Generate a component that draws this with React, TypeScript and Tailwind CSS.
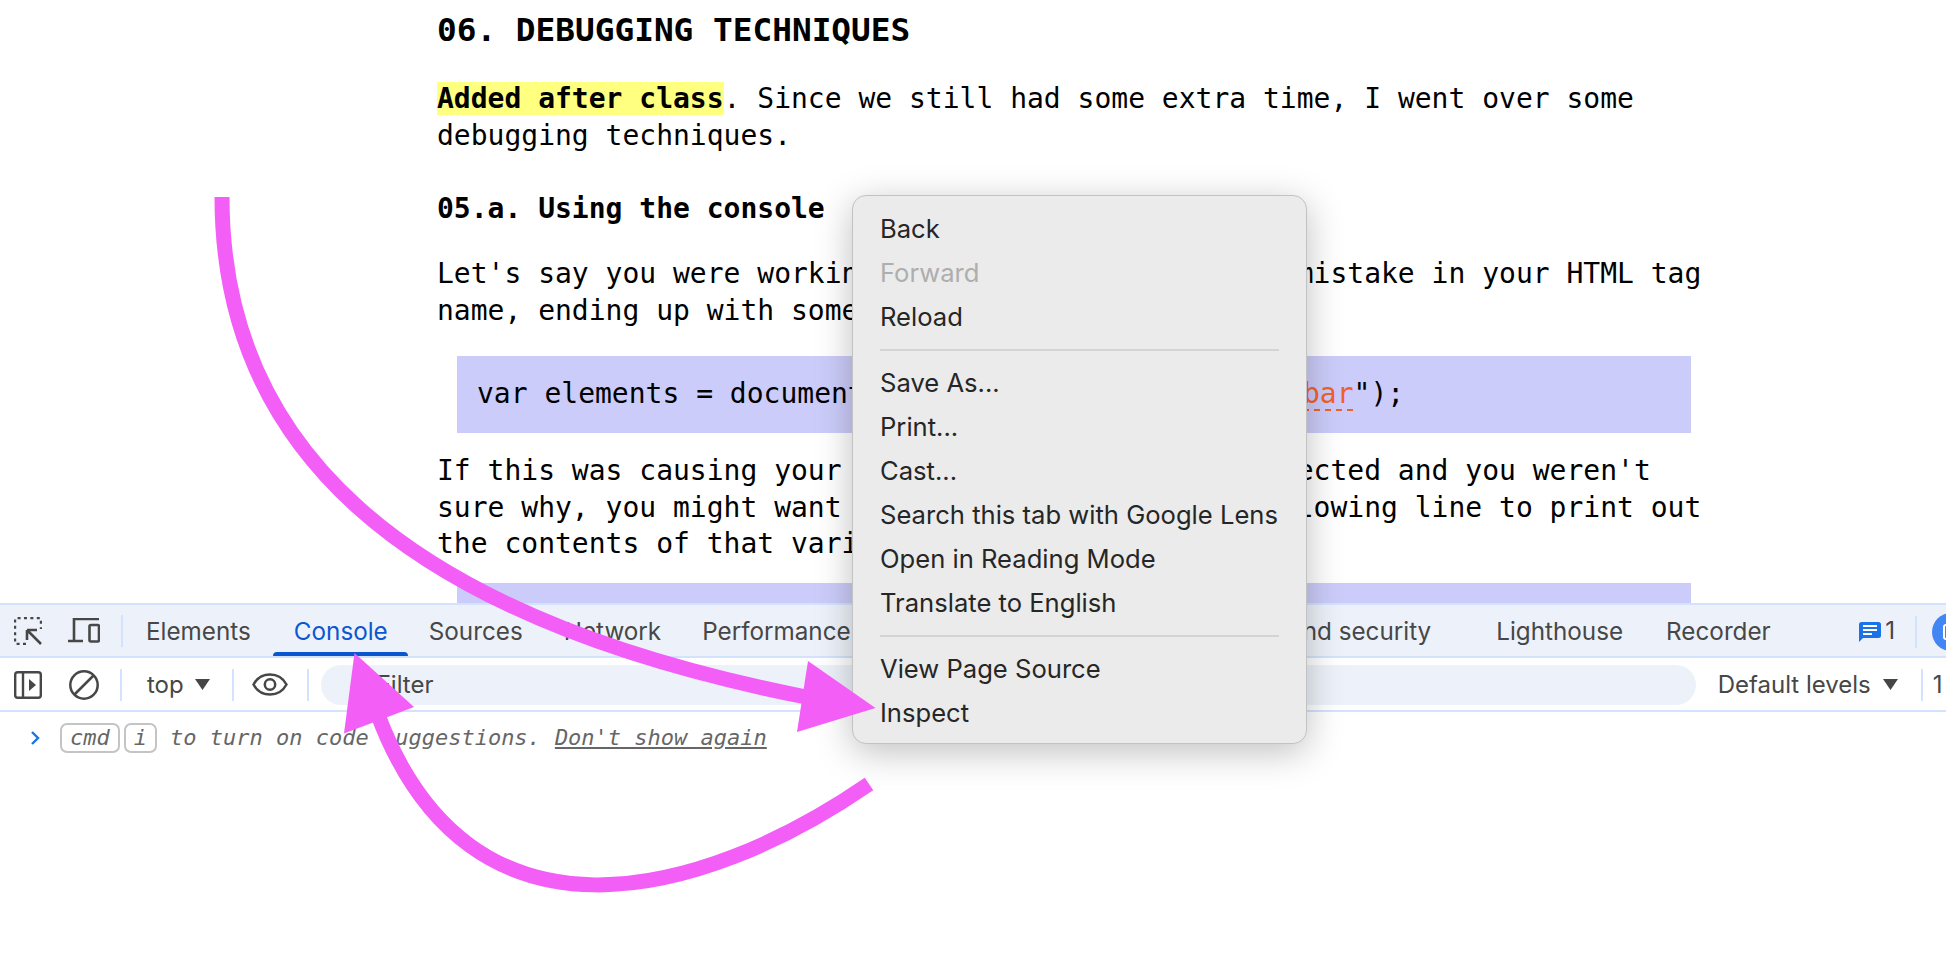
const mono = { fontFamily: '"DejaVu Sans Mono", monospace' };

const tabs = ['Elements', 'Console', 'Sources', 'Network', 'Performance', 'Memory', 'Application', 'Privacy and security', 'Lighthouse', 'Recorder'];

const menuGroups = [
  ['Back', 'Forward', 'Reload'],
  ['Save As...', 'Print...', 'Cast...', 'Search this tab with Google Lens', 'Open in Reading Mode', 'Translate to English'],
  ['View Page Source', 'Inspect'],
];

const Divider = () => <div className="w-[2px] h-[32px] bg-[#d3e3fd] shrink-0" />;

const Caret = () => (
  <svg width="15" height="11" viewBox="0 0 15 11" className="shrink-0">
    <path d="M0 0H15L7.5 11Z" fill="#444746" />
  </svg>
);

const InspectIcon = () => (
  <svg width="28" height="28" viewBox="0 0 28 28" fill="none" className="shrink-0">
    <path d="M12 27H2a1 1 0 0 1-1-1V2a1 1 0 0 1 1-1h24a1 1 0 0 1 1 1v10" stroke="#474747" strokeWidth="2.4" strokeDasharray="3 3.4" />
    <path d="M27 27 13 13M13 13v10M13 13h10" stroke="#474747" strokeWidth="2.6" />
  </svg>
);

const DeviceIcon = () => (
  <svg width="32" height="25" viewBox="0 0 32 25" fill="none" className="shrink-0">
    <path d="M31 1H6v21M0 23h15" stroke="#474747" strokeWidth="2.6" />
    <rect x="21.5" y="7" width="9.5" height="16.5" rx="1.5" stroke="#474747" strokeWidth="2.6" />
  </svg>
);

const SidebarIcon = () => (
  <svg width="28" height="28" viewBox="0 0 28 28" fill="none" className="shrink-0">
    <rect x="1.2" y="1.2" width="25.6" height="25.6" rx="2.5" stroke="#474747" strokeWidth="2.4" />
    <path d="M9 1v26" stroke="#474747" strokeWidth="2.4" />
    <path d="M15 8v12l7-6Z" fill="#474747" />
  </svg>
);

const BlockIcon = () => (
  <svg width="30" height="30" viewBox="0 0 30 30" fill="none" className="shrink-0">
    <circle cx="15" cy="15" r="13.7" stroke="#474747" strokeWidth="2.5" />
    <path d="M5.5 24.5 24.5 5.5" stroke="#474747" strokeWidth="2.5" />
  </svg>
);

const EyeIcon = () => (
  <svg width="36" height="23" viewBox="0 0 36 23" fill="none" className="shrink-0">
    <path d="M1.5 11.5C5 5 11 1.5 18 1.5S31 5 34.5 11.5C31 18 25 21.5 18 21.5S5 18 1.5 11.5Z" stroke="#474747" strokeWidth="2.5" />
    <circle cx="18" cy="11.5" r="5.2" stroke="#474747" strokeWidth="2.5" />
  </svg>
);

const MessageIcon = () => (
  <svg width="22" height="20" viewBox="0 0 22 20" className="shrink-0">
    <path d="M2.5 0h17A2.5 2.5 0 0 1 22 2.5v11a2.5 2.5 0 0 1-2.5 2.5H4L0 20V2.5A2.5 2.5 0 0 1 2.5 0Z" fill="#1a73e8" />
    <path d="M4 4h14M4 8h14M4 12h9" stroke="#fff" strokeWidth="1.8" />
  </svg>
);

const Arrows = () => (
  <svg width="1946" height="956" viewBox="0 0 1946 956" fill="none" className="absolute left-0 top-0 pointer-events-none">
    <path d="M222 197C222 440 390 615 806 697" stroke="#f25ef6" strokeWidth="15" />
    <path d="M875.5 708 808 661 797 732Z" fill="#f25ef6" />
    <path d="M869 784C700 900 470 960 378 715" stroke="#f25ef6" strokeWidth="15" />
    <path d="M354.5 653 414 707 344 733.5Z" fill="#f25ef6" />
  </svg>
);

const ContextMenu = () => (
  <div
    className="absolute left-[852px] top-[195px] w-[455px] rounded-[14px] border border-[#c2c2c2] bg-[#ebebeb] pt-[11px] pb-[8px] shadow-[0_8px_36px_rgba(0,0,0,0.25)]"
    style={{ fontFamily: 'Inter, sans-serif' }}
  >
    {menuGroups.map((group, i) => (
      <div key={i}>
        {i > 0 && <div className="mx-[27px] my-[10px] h-[2px] bg-[#d4d4d4]" />}
        {group.map((item) => (
          <div
            key={item}
            className={`flex h-[44px] items-center pl-[27px] text-[25.6px] whitespace-nowrap ${item === 'Forward' ? 'text-[#aeaeae]' : 'text-[#262626]'}`}
          >
            {item}
          </div>
        ))}
      </div>
    ))}
  </div>
);

const Page = () => (
  <div className="h-[603px] shrink-0 overflow-hidden bg-white pl-[437px] pt-[11px] text-[28px] leading-[36.5px] text-black" style={mono}>
    <h1 className="text-[32.75px] font-bold leading-[38px]">06. DEBUGGING TECHNIQUES</h1>
    <p className="mt-[32px]">
      <span className="bg-[#ffff80] font-bold">Added after class</span>. Since we still had some extra time, I went over some
      <br />
      debugging techniques.
    </p>
    <h2 className="mt-[37px] font-bold">05.a. Using the console</h2>
    <p className="mt-[28.5px]">
      Let's say you were working on some code and made a mistake in your HTML tag
      <br />
      name, ending up with something like this:
    </p>
    <div className="ml-[20px] mt-[27px] flex h-[77px] w-[1234px] items-center bg-[#ccccfa] pl-[20px]">
      <span>
        var elements = document.getElementsByTagName("foo
        <span className="text-[#f0622a] underline decoration-dashed decoration-2 underline-offset-[6px]">bar</span>
        ");
      </span>
    </div>
    <p className="mt-[20px]">
      If this was causing your program to not work as expected and you weren't
      <br />
      sure why, you might want to temporarily add the following line to print out
      <br />
      the contents of that variable:
    </p>
    <div className="ml-[20px] mt-[20px] h-[77px] w-[1234px] bg-[#ccccfa]" />
  </div>
);

const DevTools = () => (
  <div className="flex-1 border-t-[2px] border-[#d3e3fd] bg-white" style={{ fontFamily: 'Inter, sans-serif' }}>
    <div className="flex h-[53px] items-center overflow-hidden border-b-[2px] border-[#d3e3fd] bg-[#edf2fa] pl-[14px] text-[24.25px] text-[#474747]">
      <InspectIcon />
      <div className="ml-[26px]"><DeviceIcon /></div>
      <div className="ml-[21px]"><Divider /></div>
      <div className="ml-[2.5px] flex h-full shrink-0 items-center">
        {tabs.map((tab) => (
          <div
            key={tab}
            className={`relative flex h-full items-center px-[20.5px] pt-[3px] whitespace-nowrap ${tab === 'Console' ? 'text-[#0b57d0]' : ''} ${tab === 'Elements' ? 'mr-[2px]' : ''} ${tab === 'Privacy and security' ? 'mr-[24px]' : ''} ${tab === 'Lighthouse' ? 'mr-[2px]' : ''}`}
          >
            {tab}
            {tab === 'Console' && <div className="absolute bottom-0 left-0 right-0 h-[4px] rounded-t-[4px] bg-[#0b57d0]" />}
          </div>
        ))}
      </div>
      <div className="ml-auto mr-[-24px] flex shrink-0 items-center pt-[2px]">
        <MessageIcon />
        <span className="ml-[4px]">1</span>
        <div className="ml-[20px]"><Divider /></div>
        <div className="ml-[15px] flex h-[38px] w-[38px] shrink-0 items-center justify-center rounded-full bg-[#4285f4]">
          <div className="h-[16px] w-[16px] rounded-[3px] border-2 border-white" />
        </div>
      </div>
    </div>
    <div className="flex h-[54px] items-center overflow-hidden border-b-[2px] border-[#d3e3fd] pl-[14px] pt-[1px] text-[24px] text-[#474747]">
      <SidebarIcon />
      <div className="ml-[27px]"><BlockIcon /></div>
      <div className="ml-[21px]"><Divider /></div>
      <span className="ml-[25px]">top</span>
      <div className="ml-[11px]"><Caret /></div>
      <div className="ml-[22px]"><Divider /></div>
      <div className="ml-[18px]"><EyeIcon /></div>
      <div className="ml-[19px]"><Divider /></div>
      <div className="ml-[12px] flex h-[40px] w-[1375px] shrink-0 items-center rounded-full bg-[#edf2fa] pl-[56px]">Filter</div>
      <span className="ml-[22px] shrink-0">Default levels</span>
      <div className="ml-[12px]"><Caret /></div>
      <div className="ml-[23px]"><Divider /></div>
      <span className="ml-[10px]">1</span>
    </div>
    <div className="flex items-center pl-[30px] pt-[9px] text-[22px] italic text-[#666]" style={mono}>
      <svg width="10" height="14" viewBox="0 0 10 14" fill="none" className="shrink-0">
        <path d="M2 1l6 6-6 6" stroke="#1a73e8" strokeWidth="2.4" />
      </svg>
      <span className="ml-[20px] flex h-[30px] items-center rounded-[7px] border-2 border-[#c4c4c4] px-[8px]">cmd</span>
      <span className="ml-[4px] flex h-[30px] items-center rounded-[7px] border-2 border-[#c4c4c4] px-[8px]">i</span>
      <span className="ml-[13px] whitespace-nowrap">to turn on code suggestions.</span>
      <span className="ml-[14px] whitespace-nowrap underline">Don't show again</span>
    </div>
  </div>
);

export default function App() {
  return (
    <div className="relative flex h-[956px] w-[1946px] flex-col overflow-hidden bg-white">
      <Page />
      <DevTools />
      <ContextMenu />
      <Arrows />
    </div>
  );
}
